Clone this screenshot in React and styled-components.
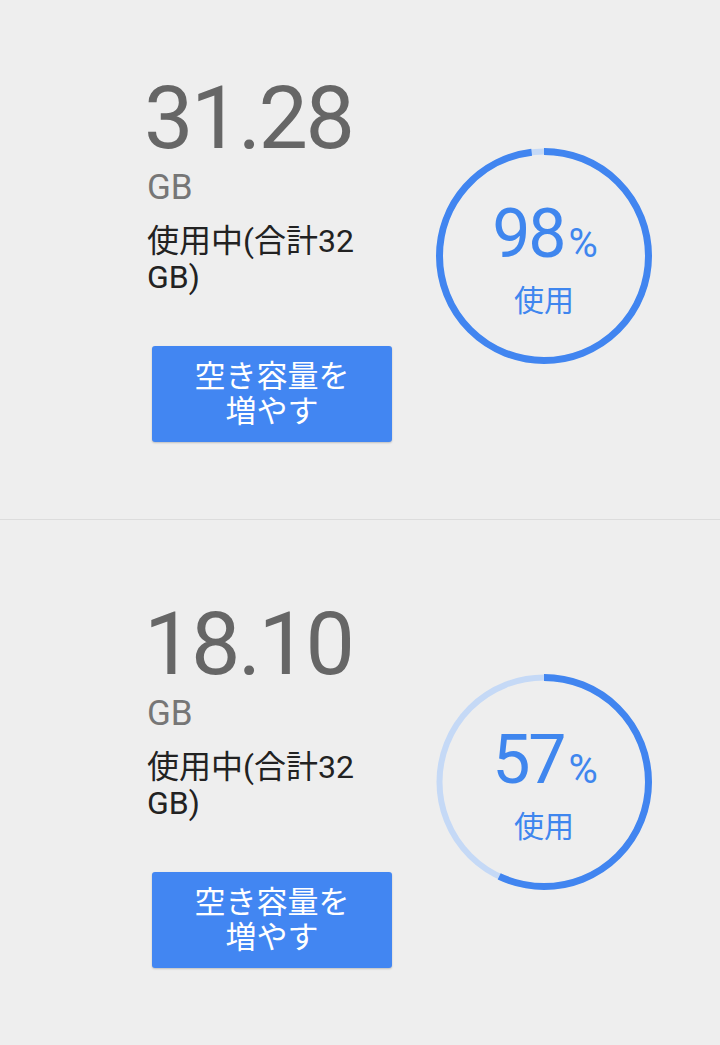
import React from "react";
import styled, { createGlobalStyle } from "styled-components";

const Global = createGlobalStyle`
  html, body {
    margin: 0;
    padding: 0;
    background: #eeeeee;
  }
  body {
    font-family: Roboto, "Noto Sans CJK JP", sans-serif;
  }
`;

const Page = styled.div`
  width: 720px;
  height: 1045px;
  overflow: hidden;
  background: #eeeeee;
`;

const Section = styled.section`
  display: flex;
  justify-content: space-between;
  height: 519px;
  box-sizing: border-box;
  padding: 75px 68px 0 147px;
`;

const Divider = styled.div`
  height: 1px;
  background: #dcdcdc;
  margin-bottom: 6px;
`;

const Info = styled.div`
  display: flex;
  flex-direction: column;
  width: 245px;
`;

const Amount = styled.div`
  font-size: 88px;
  line-height: 86px;
  color: #666666;
  letter-spacing: -2.5px;
  margin-left: -3px;
`;

const Unit = styled.div`
  margin-top: 7px;
  font-size: 35px;
  line-height: 40px;
  color: #767676;
`;

const Usage = styled.div`
  margin-top: 15px;
  font-size: 32px;
  line-height: 36px;
  color: #222222;
`;

const Button = styled.button`
  margin: 51px 0 0 5px;
  width: 240px;
  height: 96px;
  border: none;
  border-radius: 3px;
  background: #4286f2;
  color: #ffffff;
  font-family: Roboto, "Noto Sans CJK JP", sans-serif;
  font-size: 31px;
  line-height: 35px;
  padding: 0 36px;
  box-shadow: 0 1px 2px rgba(0, 0, 0, 0.2);
`;

const Gauge = styled.div`
  display: grid;
  width: 216px;
  height: 216px;
  margin-top: 73px;
  & > * {
    grid-area: 1 / 1;
  }
`;

const GaugeLabel = styled.div`
  display: flex;
  flex-direction: column;
  align-items: center;
  justify-content: center;
  padding-top: 6px;
  color: #3f86ee;
`;

const Percent = styled.div`
  font-size: 68px;
  line-height: 70px;
  letter-spacing: -2px;
  margin-left: 2px;
`;

const Sign = styled.span`
  font-size: 40px;
  margin-left: 4px;
  letter-spacing: 0;
`;

const Used = styled.div`
  margin-top: 4px;
  font-size: 30px;
  line-height: 36px;
`;

const Ring = ({ value }) => {
  const r = 104.5;
  const c = 2 * Math.PI * r;
  return (
    <svg width="216" height="216" viewBox="0 0 216 216">
      <circle cx="108" cy="108" r={r} fill="none" stroke="#c5d9f6" strokeWidth="6" />
      <circle
        cx="108"
        cy="108"
        r={r}
        fill="none"
        stroke="#4185f0"
        strokeWidth="7"
        strokeDasharray={`${(c * value) / 100} ${c}`}
        transform="rotate(-90 108 108)"
      />
    </svg>
  );
};

const Storage = ({ used, total, percent }) => (
  <Section>
    <Info>
      <Amount>{used}</Amount>
      <Unit>GB</Unit>
      <Usage>使用中(合計{total} GB)</Usage>
      <Button>空き容量を増やす</Button>
    </Info>
    <Gauge>
      <Ring value={percent} />
      <GaugeLabel>
        <Percent>
          {percent}
          <Sign>%</Sign>
        </Percent>
        <Used>使用</Used>
      </GaugeLabel>
    </Gauge>
  </Section>
);

export default function App() {
  return (
    <Page>
      <Global />
      <Storage used="31.28" total={32} percent={98} />
      <Divider />
      <Storage used="18.10" total={32} percent={57} />
    </Page>
  );
}
